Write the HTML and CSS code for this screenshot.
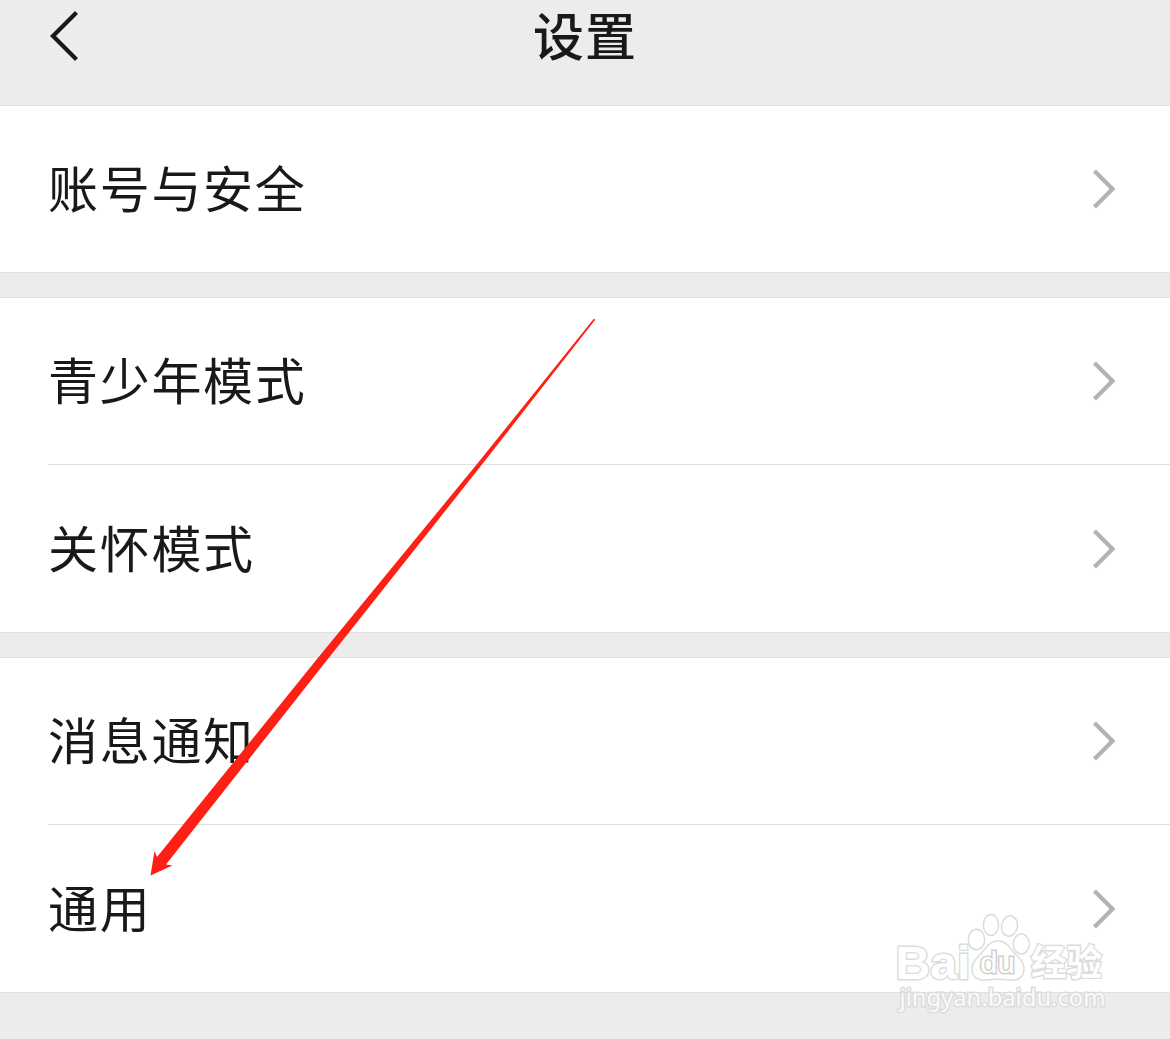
FILE: index.html
```html
<!DOCTYPE html>
<html lang="zh-CN">
<head>
    <meta charset="UTF-8">
    <meta name="viewport" content="width=device-width, initial-scale=1.0">
    <title>设置</title>

    <link rel="stylesheet" href="styles.css">
</head>
<body>

    <!-- Header -->
    <div class="header">
        <a href="#" class="back-btn">
            <svg width="30" height="54" viewBox="0 0 30 54"><path d="M27.5 3.5 L4 27 L27.5 50.5" /></svg>
        </a>
        <h1>设置</h1>
    </div>

    <!-- Settings List -->
    <div class="group first">
        <a href="#" class="row"><span>账号与安全</span><svg class="chevron" viewBox="0 0 26 42"><path d="M3.5 3 L21.5 21 L3.5 39" /></svg></a>
    </div>

    <div class="group">
        <a href="#" class="row"><span>青少年模式</span><svg class="chevron" viewBox="0 0 26 42"><path d="M3.5 3 L21.5 21 L3.5 39" /></svg></a>
        <div class="divider"></div>
        <a href="#" class="row tall"><span>关怀模式</span><svg class="chevron" viewBox="0 0 26 42"><path d="M3.5 3 L21.5 21 L3.5 39" /></svg></a>
    </div>

    <div class="group">
        <a href="#" class="row"><span>消息通知</span><svg class="chevron" viewBox="0 0 26 42"><path d="M3.5 3 L21.5 21 L3.5 39" /></svg></a>
        <div class="divider"></div>
        <a href="#" class="row tall"><span>通用</span><svg class="chevron" viewBox="0 0 26 42"><path d="M3.5 3 L21.5 21 L3.5 39" /></svg></a>
    </div>

    <!-- Arrow -->
    <svg class="arrow" width="1170" height="1039" viewBox="0 0 1170 1039">
        <path d="M593.8 318.8 L595.2 319.8 L480 467 L320 669 L166 864.5 L172.5 865.5 L150.5 875.5 L154.5 851 L157 857 L317 659 L477 464 Z" />
    </svg>

    <!-- Watermark -->
    <svg class="watermark" width="220" height="110" viewBox="0 0 220 110">
        <g class="paw">
            <ellipse cx="81.5" cy="29.5" rx="8.2" ry="10.2" />
            <ellipse cx="96" cy="15" rx="7.6" ry="10.5" />
            <ellipse cx="114.5" cy="16" rx="7.9" ry="10.2" transform="rotate(10 114.5 16)" />
            <ellipse cx="126.3" cy="34" rx="8" ry="10" />
            <path d="M103 31 C109 31 113 34 117 40 C121 46 129 50 129 59 C129 67 123 71 116 70 C108 69 98 69 90 70 C83 71 77 67 77 59 C77 50 85 46 89 40 C93 34 97 31 103 31 Z" />
        </g>
        <text class="bai" x="0.5" y="69" textLength="75" lengthAdjust="spacingAndGlyphs">Bai</text>
        <text class="du" x="85" y="63" textLength="35" lengthAdjust="spacingAndGlyphs">du</text>
        <text class="jingyan" x="136" y="66" textLength="71" lengthAdjust="spacingAndGlyphs">经验</text>
        <text class="site" x="4.5" y="96" textLength="206" lengthAdjust="spacingAndGlyphs">jingyan.baidu.com</text>
    </svg>

</body>
</html>
```
FILE: styles.css
```css
/* Global Styles */
* {
    margin: 0;
    padding: 0;
    box-sizing: border-box;
    font-family: "Noto Sans CJK SC", sans-serif;
}

body {
    position: relative;
    background: #ececec;
    height: 1039px;
    overflow: hidden;
    color: #191919;
}

/* Header */
.header {
    display: grid;
    grid-template-columns: 100px 1fr 100px;
    height: 106px;
    padding-bottom: 31px;
    border-bottom: 1px solid #e0e0e0;
    align-items: center;
}

.header h1 {
    grid-column: 2;
    padding-bottom: 5px;
    font-size: 51px;
    font-weight: 500;
    line-height: 69px;
    letter-spacing: 1px;
    text-align: center;
}

.back-btn {
    padding-left: 49px;
    height: 56px;
}

.back-btn svg {
    display: block;
    fill: none;
    stroke: #191919;
    stroke-width: 4.2;
}

/* Groups */
.group {
    margin-top: 24px;
    background: #fff;
    border-top: 1px solid #e0e0e0;
    border-bottom: 1px solid #e0e0e0;
}

.group.first {
    margin-top: 0;
    border-top: none;
}

.row {
    display: flex;
    align-items: center;
    justify-content: space-between;
    height: 166px;
    padding: 0 53px 0 48px;
    color: #191919;
    font-size: 50px;
    line-height: 74px;
    letter-spacing: 1.7px;
    text-decoration: none;
}

.row span {
    padding-bottom: 6px;
}

.row.tall {
    height: 167px;
}

.divider {
    height: 1px;
    margin-left: 48px;
    background: #e0e0e0;
}

.chevron {
    width: 26px;
    height: 42px;
    fill: none;
    stroke: #b2b2b2;
    stroke-width: 4.2;
}

/* Arrow */
.arrow {
    position: absolute;
    top: 0;
    left: 0;
    fill: #ff2015;
    pointer-events: none;
}

/* Watermark */
.watermark {
    position: absolute;
    left: 895px;
    top: 910px;
    fill: #fff;
    stroke: #dcdcdc;
    stroke-width: 1.5;
}

.watermark text {
    paint-order: stroke;
    stroke-width: 2.8;
}

.watermark .bai {
    font-family: "Liberation Sans", sans-serif;
    font-size: 47px;
    font-weight: 700;
}

.watermark .du {
    font-family: "Liberation Sans", sans-serif;
    font-size: 29px;
    stroke: #cfcfcf;
}

.watermark .jingyan {
    font-size: 36px;
    font-weight: 700;
}

.watermark .site {
    fill: #fafafa;
    font-family: "Noto Sans", sans-serif;
    font-size: 23px;
    font-weight: 400;
}
```
